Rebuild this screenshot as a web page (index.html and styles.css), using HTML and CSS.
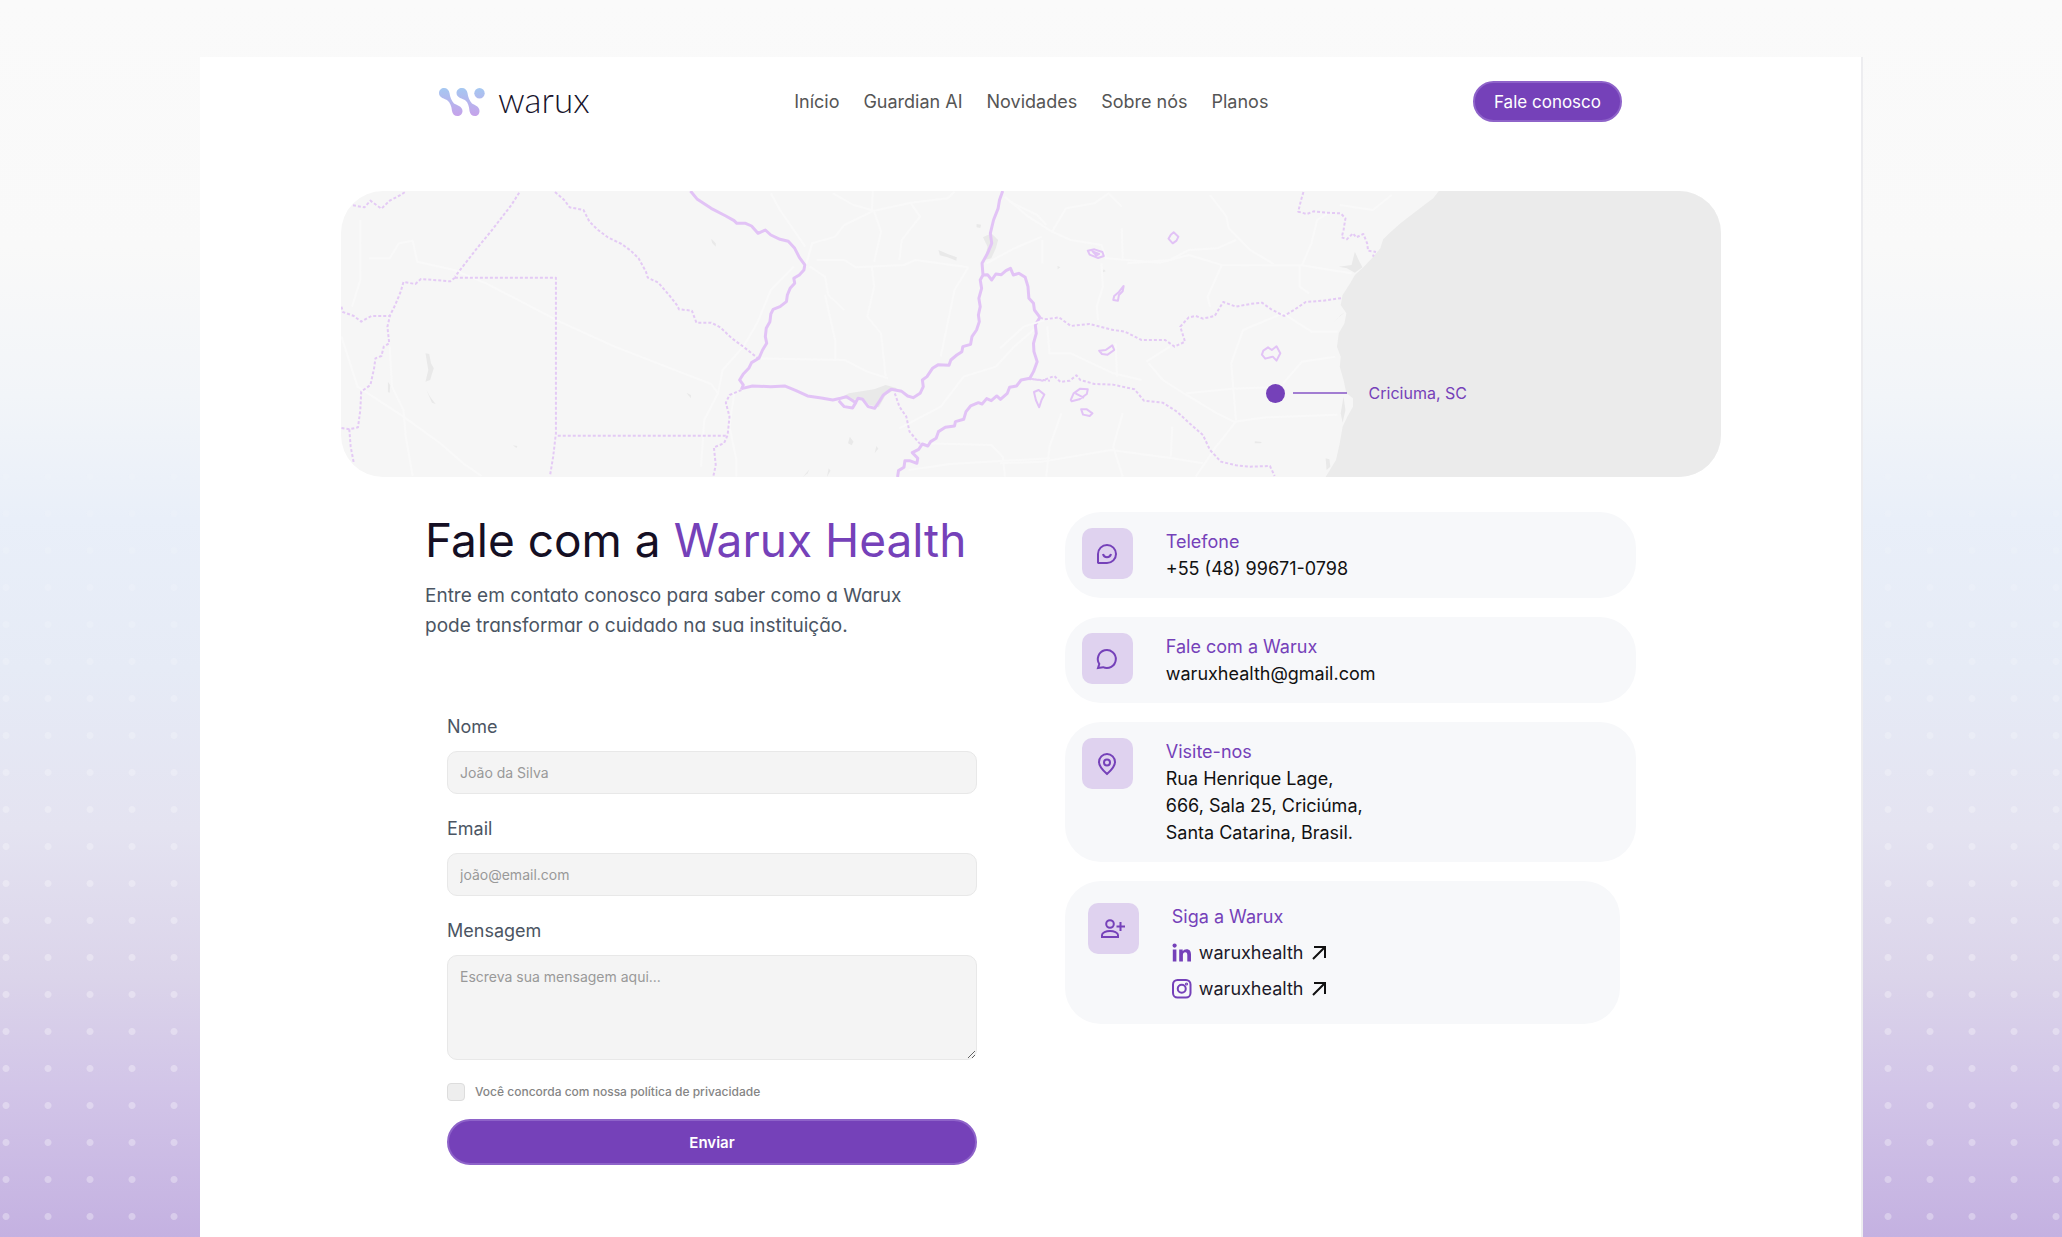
FILE: index.html
```
<!DOCTYPE html>
<html lang="pt-BR">

<head>
    <meta charset="UTF-8" />
    <meta name="viewport" content="width=device-width, initial-scale=1.0" />
    <title>Warux Health - Contato</title>
    <link rel="stylesheet" href="styles.css">
</head>

<body>
    <main class="page">
        <header class="header">
            <a class="logo" href="#">
                <svg class="logo-mark" viewBox="0 0 46 28" width="46" height="28" aria-hidden="true">
                    <defs>
                        <linearGradient id="logoGradient" x1="0" y1="0" x2="0" y2="28" gradientUnits="userSpaceOnUse">
                            <stop offset="0" stop-color="#a5c8f1" />
                            <stop offset="1" stop-color="#c6a2ea" />
                        </linearGradient>
                    </defs>
                    <g fill="url(#logoGradient)">
                        <path d="M5 0C8 0 10 2 10.500 5C11 9 12.500 13 15 15.500C17 17 23.500 18 23.500 23C23.500 26 21 28 18.500 28C15.500 28 13.500 26 13 23C12.500 18 11 14.500 8.500 12.500C6 10.500 0 10 0 5C0 2 2.500 0 5 0Z" />
                        <path d="M23 0C26 0 28 2 28.500 5C29 9 30.500 13 33 15.500C35 17 40.500 18 40.500 23C40.500 26 38.500 28 36 28C33 28 31 26 30.500 23C30 18 29 14.500 26.500 12.500C24 10.500 17.500 10 17.500 5C17.500 2 20 0 23 0Z" />
                        <circle cx="40.500" cy="5.200" r="5.200" />
                    </g>
                </svg>
                <span>warux</span>
            </a>
            <nav class="nav">
                <a href="#">Início</a>
                <a href="#">Guardian AI</a>
                <a href="#">Novidades</a>
                <a href="#">Sobre nós</a>
                <a href="#">Planos</a>
            </nav>
            <button class="btn btn-header" type="button">Fale conosco</button>
        </header>

        <!-- Map -->
        <div class="map">
            <svg class="map-art" viewBox="0 0 1380 286" preserveAspectRatio="xMidYMid slice" aria-hidden="true">
                <!-- West -->
                <g transform="translate(-11 -11) scale(0.4592 0.3333)">
                    <g class="lake">
                        <path d="M208 520L216 522L220 550L226 565L218 600L208 605L214 570Z" />
                        <path d="M126 605L131 615L130 638L126 636Z" />
                        <path d="M210 630L218 650L230 672L222 668Z" />
                        <path d="M1130 640L1185 628L1210 615L1235 625L1210 645L1195 682L1175 675L1160 655L1140 660L1110 655Z" />
                        <path d="M1422 172L1440 160L1455 180L1450 205L1440 235L1425 240L1432 200Z" />
                        <path d="M1325 210L1345 222L1365 232L1364 242L1345 232L1328 226Z" />
                        <path d="M1408 132L1418 134L1416 144L1408 142Z" />
                        <path d="M830 176L840 190L840 200L832 188Z" />
                        <path d="M1132 770L1140 785L1136 796L1128 790Z" />
                        <path d="M1190 798L1194 806L1186 820Z" />
                        <path d="M1044 868L1040 880L1030 891Z" />
                        <path d="M1086 865L1090 872L1082 891Z" />
                        <path d="M776 638L786 645L786 655Z" />
                        <path d="M398 796L408 798L406 804Z" />
                    </g>
                    <g class="road">
                        <path d="M66 120L66 300L48 380M85 235L130 235L150 190L180 182L190 245L270 270L340 310L500 425L620 500L760 575L830 612L845 640L815 720L808 860" />
                        <path d="M25 470L60 620L160 710L240 790L290 850L330 888M130 500L135 620L160 690L165 770L180 888" />
                        <path d="M880 640L870 740L885 840L885 890M845 640L855 570L900 500L930 430L960 330L1010 260" />
                        <path d="M1035 262L1050 190L1100 170L1120 135L1180 95L1182 33M1095 40L1140 75L1185 92L1265 68L1345 55L1360 35M1185 95L1200 155L1185 245M1265 70L1285 110L1245 180L1240 240" />
                        <path d="M1060 240L1120 240L1145 262L1250 255L1275 240L1390 262M1045 260L1078 290L1085 345L1120 390M1078 345L1100 480L1100 540M1180 260L1185 320L1170 410L1200 460L1210 590" />
                        <path d="M930 535L1120 540L1170 575L1215 595M1390 262L1360 330L1330 530M1540 440L1490 500L1450 560L1380 590L1330 680L1240 745" />
                        <path d="M960 40L980 90L1010 150L1035 200M1290 790L1440 795L1465 830L1470 890M1260 870L1350 852L1568 835M1430 250L1490 205L1550 170M1480 65L1540 105L1560 135" />
                    </g>
                    <g class="border-dotted">
                        <path d="M50 76L75 82L88 62L112 86L130 62L152 46L166 34" />
                        <path d="M412 38L395 75L350 155L320 205L272 290" />
                        <path d="M272 293L492 293L492 760L486 830L479 888" />
                        <path d="M272 293L262 304L198 297L186 312L160 306L154 335L142 375L131 405L125 440L129 490L117 500L112 528L99 535L96 565L88 615L68 635L66 690L61 742L42 748L45 800L52 850" />
                        <path d="M25 380L28 396L52 408L68 425L90 408L131 408" />
                        <path d="M25 744L42 748" />
                        <path d="M490 36L510 60L522 82L552 90L565 125L582 148L605 172L635 192L655 212L672 235L688 275L692 293L715 308L740 348L756 376L760 388L788 392L798 428L830 428L850 442L875 475L900 500L932 535" />
                        <path d="M496 767L862 767" />
                        <path d="M896 630L870 645L862 668L870 710L866 765L858 790L836 802L840 855L835 888" />
                        <path d="M1230 640L1240 680L1255 710L1262 755L1285 792" />
                        <path d="M1520 597L1568 602" />
                    </g>
                    <g class="border-solid">
                        <path d="M785 33L800 58L830 85L862 108L880 122L886 130L905 130L918 138L932 160L948 150L960 165L980 178L998 184L1012 205L1022 232L1034 255L1032 270L1022 285L1010 295L1012 310L1002 325L996 345L994 365L980 380L965 388L960 402L958 425L950 445L948 470L951 490L942 510L934 535L918 548L912 565L900 582L892 600L900 615L896 628" />
                        <path d="M896 626L920 618L960 620L990 618L1015 632L1040 648L1070 654L1095 660L1112 655L1125 650L1145 668L1138 684L1120 680L1108 662M1138 684L1150 655L1160 658L1172 680L1186 685L1196 665L1205 645L1222 628L1245 634L1258 648L1270 653L1285 640L1292 620L1290 600L1300 590L1312 565L1325 554L1348 556L1352 540L1365 525L1376 515L1378 500L1395 493L1398 470L1408 450L1414 425L1412 405L1416 380L1413 355L1419 325L1416 300L1422 285L1420 250L1432 220L1441 190L1438 160L1445 120L1455 85L1458 60L1465 33" />
                        <path d="M1422 285L1432 284L1441 300L1450 282L1462 284L1472 272L1482 265L1488 285L1500 280L1514 292L1520 320L1522 355L1532 370L1534 390L1546 412L1536 435L1538 460L1532 490L1533 515L1540 545L1532 575L1524 595L1505 600L1495 618L1480 622L1475 640L1460 658L1452 648L1440 662L1430 656L1420 672L1412 668L1395 678L1385 695L1380 718L1362 725L1360 738L1340 742L1325 755L1320 775L1308 785L1302 798L1290 792L1282 808L1268 818L1280 835L1278 850L1262 842L1252 842L1250 862L1238 872L1236 891" />
                    </g>
                </g>
                <!-- East -->
                <g transform="translate(659 -11) scale(0.4719 0.3333)">
                    <path class="sea" d="M930 33L918 55L890 85L850 128L825 160L812 178L806 205L790 232L770 262L752 285L742 310L726 345L722 375L734 400L730 430L718 460L714 500L722 530L720 560L728 600L734 640L748 655L748 680L736 710L726 740L720 790L712 840L690 891L1600 891L1600 33Z" />
                    <g class="lake">
                        <path d="M752 215L760 240L768 262L752 278L735 265L718 260L745 255Z" />
                        <path d="M730 398L715 415L708 426L722 405Z" />
                        <path d="M728 650L732 690L726 728L722 700Z" />
                        <path d="M690 835L698 838L700 860L692 870Z" />
                        <path d="M122 258L128 262L122 268ZM220 268L224 274L216 278ZM540 784L555 786L552 790L540 790Z" />
                    </g>
                    <g class="road">
                        <path d="M10 50L60 110L110 155L150 180L215 195L225 235L340 248L400 225L470 255L640 256L700 270L745 280M110 155L140 85L200 70L230 40L258 80" />
                        <path d="M445 45L480 110L485 145L530 210L580 252M500 180L460 205L400 210L360 240L270 250M258 145L260 235M90 180L90 250M215 250L218 320L205 380L208 420" />
                        <path d="M635 255L635 320L655 340M640 256L660 190L672 120L700 95M470 255L440 350L445 380M0 505L50 440L120 410M100 440L105 520L150 520L240 580L300 600M245 490L248 590M310 545L360 500" />
                        <path d="M315 550L345 600L395 645L460 700L495 725L565 712L715 704M395 640L490 626L580 622M500 720L490 550L515 450L600 400L660 455L715 455M600 610L640 545L710 530" />
                        <path d="M500 725L455 805L415 890M0 850L90 845L235 810L365 835L430 850M130 700L105 800L98 890M260 700L240 800L260 890M365 740L362 830M720 75L790 90L830 45" />
                    </g>
                    <g class="border-dotted">
                        <path d="M643 36L638 60L632 95L650 102L665 94L690 98L722 100L732 115L728 150L724 172L735 178L748 160L755 172L770 162L778 190L780 212L795 215L790 230" />
                        <path d="M85 413L95 418L125 412L150 438L190 432L240 450L265 455L300 480L350 480L370 500L392 485L382 440L400 412L415 408L430 416L455 408L473 366L500 380L530 372L555 368L575 388L602 408L625 388L648 366L685 362L725 354" />
                        <path d="M65 596L90 602L115 588L128 606L148 602L162 586L170 600L200 612L240 614L285 628L305 662L345 668L375 695L400 728L430 765L445 810L468 845L500 856L530 860L572 858L582 888" />
                    </g>
                    <g class="border-solid thin">
                        <path d="M368 157L378 170L374 182L366 190L357 176L362 164Z" />
                        <path d="M186 212L200 208L217 216L220 228L208 234L190 224ZM196 214L210 222L204 226Z" />
                        <path d="M262 318L260 334L252 345L250 362L240 360L242 348L252 336Z" />
                        <path d="M210 512L224 510L238 496L242 510L228 524L216 522Z" />
                        <path d="M558 512L568 502L576 510L586 499L594 520L586 542L578 530L562 536L555 524Z" />
                        <path d="M72 636L82 630L94 644L88 660L83 682L76 660Z" />
                        <path d="M150 660L156 640L170 626L186 628L184 642L168 658L152 664ZM160 640L178 654" />
                        <path d="M172 688L184 688L196 700L190 708L176 704Z" />
                    </g>
                </g>
            </svg>
            <div class="pin">
                <span class="pin-dot"></span>
                <span class="pin-line"></span>
                <span class="pin-label">Criciuma, SC</span>
            </div>
        </div>

        <section class="contact">
            <div class="contact-left">
                <h1>Fale com a <span>Warux Health</span></h1>
                <p class="intro">Entre em contato conosco para saber como a Warux<br>pode transformar o cuidado na sua instituição.</p>

                <form class="form">
                    <div class="field">
                        <label for="nome">Nome</label>
                        <input type="text" id="nome" placeholder="João da Silva" />
                    </div>
                    <div class="field">
                        <label for="email">Email</label>
                        <input type="email" id="email" placeholder="joão@email.com" />
                    </div>
                    <div class="field">
                        <label for="mensagem">Mensagem</label>
                        <textarea id="mensagem" placeholder="Escreva sua mensagem aqui..."></textarea>
                    </div>
                    <div class="consent">
                        <input type="checkbox" id="privacidade" />
                        <label for="privacidade">Você concorda com nossa política de privacidade</label>
                    </div>
                    <button class="btn btn-submit" type="submit">Enviar</button>
                </form>
            </div>

            <div class="contact-right">
                <div class="card">
                    <div class="card-icon">
                        <svg viewBox="0 0 24 24" width="24" height="24" aria-hidden="true">
                            <path d="M3 20.500V12a9 9 0 1 1 9 9H3.500z" />
                            <path d="M8 12c1 4.200 7 4.200 8 0" />
                        </svg>
                    </div>
                    <div class="card-text">
                        <h2>Telefone</h2>
                        <p>+55 (48) 99671-0798</p>
                    </div>
                </div>
                <div class="card">
                    <div class="card-icon">
                        <svg viewBox="0 0 24 24" width="24" height="24" aria-hidden="true">
                            <path d="M3 21l1.300-4A9 9 0 1 1 8 20.200z" />
                        </svg>
                    </div>
                    <div class="card-text">
                        <h2>Fale com a Warux</h2>
                        <p>waruxhealth@gmail.com</p>
                    </div>
                </div>
                <div class="card">
                    <div class="card-icon">
                        <svg viewBox="0 0 24 24" width="24" height="24" aria-hidden="true">
                            <path d="M12 22C8 18.500 4 14.500 4 10a8 8 0 0 1 16 0c0 4.500-4 8.500-8 12z" />
                            <circle cx="12" cy="10.500" r="3" />
                        </svg>
                    </div>
                    <div class="card-text">
                        <h2>Visite-nos</h2>
                        <p>Rua Henrique Lage,<br>666, Sala 25, Criciúma,<br>Santa Catarina, Brasil.</p>
                    </div>
                </div>
                <div class="card card-social">
                    <div class="card-icon">
                        <svg viewBox="0 0 24 24" width="24" height="24" aria-hidden="true">
                            <circle cx="9" cy="7" r="3.800" />
                            <path d="M1 20v-2c0-2.500 4-4 8-4s8 1.500 8 4v2zM19.500 5v9M15.500 9.500H24" />
                        </svg>
                    </div>
                    <div class="card-text">
                        <h2>Siga a Warux</h2>
                        <a href="#">
                            <svg class="brand" viewBox="0 0 20 20" width="20" height="20" aria-hidden="true">
                                <circle cx="2.600" cy="2.600" r="2.100" fill="#7541b9" />
                                <path fill="#7541b9" d="M.8 6.500h3.600V18.500H.8zM7.200 6.500h3.500v1.700c.8-1.300 2.100-2 3.800-2 3.300 0 4.500 2.100 4.500 5.400v6.900h-3.700v-6.300c0-1.800-.5-2.900-2-2.900-1.700 0-2.400 1.200-2.400 3v6.200H7.200z" />
                            </svg>
                            <span>waruxhealth</span>
                            <svg class="arrow" viewBox="0 0 14 14" width="14" height="14" aria-hidden="true">
                                <path d="M1 13L13 1M2 1h11v11" />
                            </svg>
                        </a>
                        <a href="#">
                            <svg class="brand" viewBox="0 0 20 20" width="20" height="20" aria-hidden="true">
                                <rect x="1" y="1" width="17.500" height="17.500" rx="4.500" />
                                <circle cx="9.750" cy="9.750" r="4" />
                                <circle cx="14.500" cy="5" r=".6" />
                            </svg>
                            <span>waruxhealth</span>
                            <svg class="arrow" viewBox="0 0 14 14" width="14" height="14" aria-hidden="true">
                                <path d="M1 13L13 1M2 1h11v11" />
                            </svg>
                        </a>
                    </div>
                </div>
            </div>
        </section>
    </main>
</body>

</html>
```
FILE: styles.css
```
* {
    margin: 0;
    padding: 0;
    box-sizing: border-box;
}

body {
    font-family: Inter, "Liberation Sans", sans-serif;
    min-height: 100vh;
    display: grid;
    grid-template-columns: 200px 1fr 199px;
    background: linear-gradient(180deg, #fafafa 0%, #f9f9f9 20%, #f2f5f9 32%, #e9eff9 42%, #e6ebf6 54%, #e4e3f1 67%, #dbd4ea 79%, #d2c5e8 88%, #c4b1e1 100%);
}

/* dotted strips on both sides */
body::before,
body::after {
    content: "";
    background-image: radial-gradient(circle, rgba(255, 255, 255, 0.32) 3px, transparent 4px);
    background-size: 42px 37px;
    background-position: left -15px bottom 2px;
    -webkit-mask-image: linear-gradient(transparent 28%, #000 75%);
    mask-image: linear-gradient(transparent 28%, #000 75%);
}

body::after {
    background-position: right -15px bottom 2px;
}

.page {
    margin-top: 57px;
    background-color: #fff;
    border-right: 2px solid #ededf0;
}

.header {
    display: flex;
    justify-content: space-between;
    align-items: center;
    padding: 24px 239px;
}

.logo {
    display: flex;
    align-items: center;
    gap: 13px;
    font-family: Lato, sans-serif;
    font-size: 35px;
    font-weight: 300;
    line-height: 36px;
    color: #17132b;
    text-decoration: none;
}

.logo span {
    padding-bottom: 5px;
}

.nav {
    display: flex;
    gap: 24px;
}

.nav a {
    font-size: 18px;
    line-height: 24px;
    color: #555;
    text-decoration: none;
}

.btn {
    font-family: inherit;
    color: #fff;
    background-color: #7541b9;
    border: 2px solid #8e63c9;
    border-radius: 24px;
    cursor: pointer;
}

.btn:hover {
    background-color: #6836ab;
}

.btn-header {
    height: 41px;
    padding: 0 19px;
    font-size: 17px;
}

/* Map */
.map {
    position: relative;
    height: 286px;
    margin: 45px 140px 0 141px;
    border-radius: 42px;
    background-color: #f6f6f6;
    overflow: hidden;
}

.map-art {
    display: block;
    width: 100%;
    height: 100%;
}

.map-art path {
    vector-effect: non-scaling-stroke;
    stroke-linejoin: round;
}

.lake {
    fill: #e9e9e9;
}

.sea {
    fill: #ebebeb;
}

.road {
    fill: none;
    stroke: #f9f9f9;
    stroke-width: 2;
}

.border-dotted {
    fill: none;
    stroke: #e4caf5;
    stroke-width: 2;
    stroke-dasharray: 3 2;
}

.border-solid {
    fill: none;
    stroke: #e2c3f6;
    stroke-width: 3;
}

.thin {
    stroke-width: 2;
}

.pin {
    position: absolute;
    left: 67%;
    top: 190px;
    display: flex;
    align-items: center;
    color: #7541b9;
}

.pin-dot {
    width: 19px;
    height: 19px;
    border-radius: 50%;
    background-color: #7541b9;
}

.pin-line {
    width: 54px;
    height: 2px;
    margin: 0 22px 0 8px;
    background-color: #a27dd2;
}

.pin-label {
    font-size: 16px;
    line-height: 24px;
}

/* Contact */
.contact {
    display: grid;
    grid-template-columns: 112fr 100fr;
    align-items: start;
    padding: 35px 225px 72px;
}

h1 {
    font-size: 46px;
    font-weight: 400;
    line-height: 56px;
    color: #150f24;
    white-space: nowrap;
}

h1 span {
    color: #7541b9;
}

.intro {
    margin-top: 13px;
    font-size: 19px;
    line-height: 30px;
    color: #4b5563;
    font-feature-settings: "cv11";
}

.form {
    max-width: 552px;
    padding-left: 22px;
    margin-top: 74px;
}

.field {
    display: flex;
    flex-direction: column;
    gap: 12px;
    margin-bottom: 23px;
}

.field label {
    font-size: 18px;
    line-height: 24px;
    color: #4b5563;
}

.field input,
.field textarea {
    width: 100%;
    height: 43px;
    padding: 0 12px;
    font-family: inherit;
    font-size: 14px;
    color: #333;
    background-color: #f4f4f4;
    border: 1px solid #e8e8e8;
    border-radius: 10px;
}

.field textarea {
    height: 105px;
    padding: 12px;
    line-height: 18px;
}

.field ::placeholder {
    color: #999;
}

.consent {
    display: flex;
    align-items: center;
    gap: 10px;
}

.consent input {
    appearance: none;
    width: 18px;
    height: 18px;
    background-color: #eee;
    border: 1px solid #ddd;
    border-radius: 4px;
}

.consent input:checked {
    background-color: #7541b9;
}

.consent label {
    font-size: 12px;
    font-weight: 500;
    line-height: 18px;
    color: #858585;
}

.btn-submit {
    width: 100%;
    height: 46px;
    margin-top: 18px;
    font-size: 15px;
    font-weight: 600;
}

/* Cards */
.contact-right {
    display: flex;
    flex-direction: column;
    gap: 19px;
}

.card {
    display: flex;
    gap: 33px;
    padding: 16px 17px;
    border-radius: 36px;
    background-color: #f7f8fa;
}

.card-icon {
    display: flex;
    justify-content: center;
    align-items: center;
    width: 51px;
    height: 51px;
    border-radius: 10px;
    background-color: #dfd2ef;
}

.card-icon svg,
.brand {
    fill: none;
    stroke: #7541b9;
    stroke-width: 2;
}

.card-text h2,
.card-text p {
    font-size: 18px;
    font-weight: 400;
    line-height: 27px;
}

.card-text h2 {
    color: #7541b9;
}

.card-text p {
    color: #111;
}

.card-social {
    margin-right: 16px;
    padding: 22px 23px;
}

.card-text a {
    display: flex;
    align-items: center;
    gap: 7px;
    margin-top: 9px;
    font-size: 18px;
    line-height: 27px;
    color: #1c1a29;
    text-decoration: none;
}

.card-text a .brand path,
.card-text a circle[fill] {
    stroke: none;
}

.arrow {
    margin-left: 2px;
    fill: none;
    stroke: #111;
    stroke-width: 2;
}
```
